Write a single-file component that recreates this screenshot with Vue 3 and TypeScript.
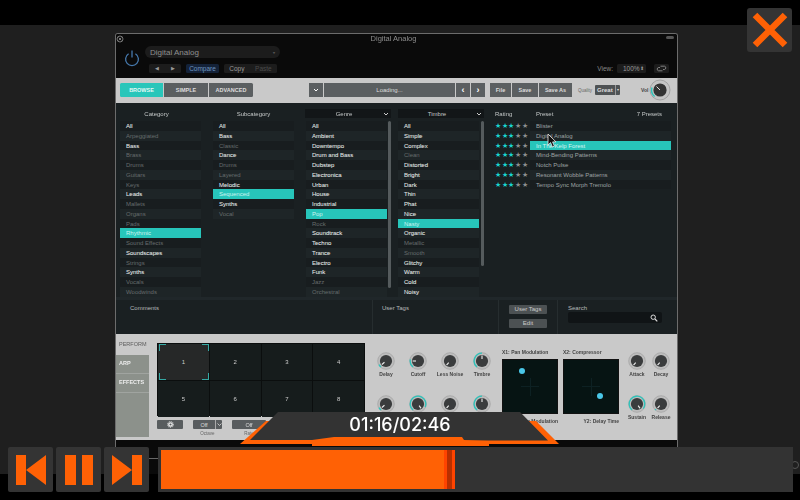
<script setup lang="ts">
interface Item { t: string; b?: boolean; s?: boolean }
const mk = (s: string): Item[] => s.split('|').map((x) => {
  const sel = x.startsWith('*'); const bright = x.startsWith('+');
  return { t: x.replace(/^[*+]/, ''), b: bright, s: sel };
});
const category = mk('+All|Arpeggiated|+Bass|Brass|Drums|Guitars|Keys|+Leads|Mallets|Organs|Pads|*Rhythmic|Sound Effects|+Soundscapes|Strings|+Synths|Vocals|Woodwinds');
const subcategory = mk('+All|+Bass|Classic|+Dance|Drums|Layered|+Melodic|*Sequenced|+Synths|Vocal');
const genre = mk('+All|+Ambient|+Downtempo|+Drum and Bass|+Dubstep|+Electronica|+Urban|+House|+Industrial|*Pop|Rock|+Soundtrack|+Techno|+Trance|+Electro|+Funk|Jazz|Orchestral');
const timbre = mk('+All|+Simple|+Complex|Clean|+Distorted|+Bright|+Dark|+Thin|+Phat|+Nice|*Nasty|+Organic|Metallic|Smooth|+Glitchy|+Warm|+Cold|+Noisy');
const presets = mk('Blister|Digital Analog|*In The Kelp Forest|Mind-Bending Patterns|Notch Pulse|Resonant Wobble Patterns|Tempo Sync Morph Tremolo');
const pads = [1, 2, 3, 4, 5, 6, 7, 8];

interface Knob { label: string; angle: number; arc: number }
const knobs: Knob[] = [
  { label: 'Delay', angle: -130, arc: 0.08 }, { label: 'Cutoff', angle: -90, arc: 0.22 }, { label: 'Less Noise', angle: -140, arc: 0 }, { label: 'Timbre', angle: 0, arc: 0.5 },
  { label: '', angle: -130, arc: 0.08 }, { label: '', angle: 145, arc: 0.9 }, { label: '', angle: -140, arc: 0 }, { label: '', angle: 0, arc: 0.5 },
];
const sideKnobs: Knob[] = [
  { label: 'Attack', angle: -140, arc: 0 }, { label: 'Decay', angle: -140, arc: 0 },
  { label: 'Sustain', angle: 145, arc: 0.95 }, { label: 'Release', angle: -140, arc: 0.03 },
];
function arcPath(frac: number, r: number, c: number): string {
  const a0 = (-140 * Math.PI) / 180;
  const a1 = a0 + (frac * 280 * Math.PI) / 180;
  const pt = (a: number) => `${(c + r * Math.sin(a)).toFixed(2)} ${(c - r * Math.cos(a)).toFixed(2)}`;
  return `M${pt(a0)} A${r} ${r} 0 ${frac > 0.64 ? 1 : 0} 1 ${pt(a1)}`;
}
</script>

<template>
  <div class="page">
    <div class="stage">
      <section class="win">
        <header class="head">
          <div class="head-title">
            <svg class="close-dot" width="8" height="8" viewBox="0 0 8 8"><circle cx="4" cy="4" r="3" fill="none" stroke="#777" /><path d="M2.6 2.6l2.8 2.8M5.4 2.6L2.6 5.4" stroke="#777" /></svg>
            <span>Digital Analog</span>
            <i class="pill"></i>
          </div>
          <div class="head-main">
            <svg class="power" width="16" height="18" viewBox="0 0 16 18"><path d="M4.6 4.800a6.400 6.400 0 1 0 6.800 0" fill="none" stroke="#4679ad" stroke-width="1.3" /><path d="M8 1.500v7" stroke="#4679ad" stroke-width="1.3" /></svg>
            <div class="head-controls">
              <div class="preset-select"><span>Digital Analog</span><b>▾</b></div>
              <div class="head-btns">
                <div class="hb arrows"><span>◀</span><span>▶</span></div>
                <div class="hb compare">Compare</div>
                <div class="hb copy"><span>Copy</span><span class="paste">Paste</span></div>
              </div>
            </div>
            <div class="view">
              <span>View:</span>
              <div class="hb zoomsel"><span>100%</span><b>⬍</b></div>
              <div class="hb link">
                <svg width="11" height="7" viewBox="0 0 11 7"><path d="M4.500 1.200h4a1.700 1.700 0 0 1 0 3.300H7M6.500 5.800h-4a1.700 1.700 0 0 1 0-3.300H4" fill="none" stroke="#999" stroke-width=".8" /></svg>
              </div>
            </div>
          </div>
        </header>

        <div class="toolbar">
          <div class="btn-group tabs">
            <span class="tb active">BROWSE</span><span class="tb">SIMPLE</span><span class="tb">ADVANCED</span>
          </div>
          <div class="btn-group loader">
            <span class="tb chev"><svg width="6" height="4" viewBox="0 0 6 4"><path d="M1 1l2 2 2-2" fill="none" stroke="#fff" stroke-width="1" /></svg></span>
            <span class="tb loading">Loading...</span>
            <span class="tb nav">‹</span><span class="tb nav">›</span>
          </div>
          <div class="btn-group files">
            <span class="tb file">File</span><span class="tb save">Save</span><span class="tb saveas">Save As</span>
          </div>
          <span class="quality-label">Quality</span>
          <div class="quality"><span>Great</span><b>▾</b></div>
          <span class="vol-label">Vol</span>
          <svg class="vol" width="22" height="22" viewBox="0 0 22 22">
            <circle cx="11" cy="11" r="10" fill="#c4c4c4" stroke="#999" stroke-width=".8" />
            <path :d="arcPath(0.24, 8.4, 11)" fill="none" stroke="#2cc4bb" stroke-width="1.4" />
            <circle cx="11" cy="11" r="6.600" fill="#333" />
            <path d="M11 11L7.500 7.500" stroke="#ddd" stroke-width="1" />
          </svg>
        </div>

        <div class="browser">
          <div class="heads">
            <div class="h h-cat">Category</div>
            <div class="h h-sub">Subcategory</div>
            <div class="h h-box h-gen"><span>Genre</span><svg width="6" height="4" viewBox="0 0 6 4"><path d="M1 1l2 2 2-2" fill="none" stroke="#ccc" stroke-width="1" /></svg></div>
            <div class="h h-box h-tim"><span>Timbre</span><svg width="6" height="4" viewBox="0 0 6 4"><path d="M1 1l2 2 2-2" fill="none" stroke="#ccc" stroke-width="1" /></svg></div>
            <div class="h h-rate">Rating</div>
            <div class="h h-pre"><span>Preset</span><span>7 Presets</span></div>
          </div>
          <div class="lists">
            <ul class="list l-cat"><li v-for="i in category" :key="i.t" :class="{ bright: i.b, sel: i.s }">{{ i.t }}</li></ul>
            <ul class="list l-sub"><li v-for="i in subcategory" :key="i.t" :class="{ bright: i.b, sel: i.s }">{{ i.t }}</li></ul>
            <ul class="list l-gen"><li v-for="i in genre" :key="i.t" :class="{ bright: i.b, sel: i.s }">{{ i.t }}</li></ul>
            <div class="scroll s-gen"><i></i></div>
            <ul class="list l-tim"><li v-for="i in timbre" :key="i.t" :class="{ bright: i.b, sel: i.s }">{{ i.t }}</li></ul>
            <div class="scroll s-tim"><i></i></div>
            <div class="ratings">
              <div v-for="p in presets" :key="p.t" class="stars"><span v-for="n in 5" :key="n" :class="{ on: n <= 3 }">★</span></div>
            </div>
            <ul class="list l-pre"><li v-for="i in presets" :key="i.t" :class="{ sel: i.s }">{{ i.t }}</li></ul>
          </div>
          <div class="info">
            <div class="i-comments">Comments</div>
            <div class="i-tags">User Tags</div>
            <div class="i-btns"><span>User Tags</span><span>Edit</span></div>
            <div class="i-search">
              <div>Search</div>
              <div class="search-box"><svg width="8" height="8" viewBox="0 0 8 8"><circle cx="3.200" cy="3.200" r="2.200" fill="none" stroke="#ddd" stroke-width="1" /><path d="M5 5l2.300 2.300" stroke="#ddd" stroke-width="1.2" /></svg></div>
            </div>
          </div>
        </div>

        <div class="perform">
          <nav class="side">
            <div class="side-cur">PERFORM</div>
            <div class="side-tab">ARP</div>
            <div class="side-tab">EFFECTS</div>
            <div class="side-rest"></div>
          </nav>
          <div class="pad-col">
            <div class="pads">
              <div v-for="p in pads" :key="p" class="pad" :class="{ cur: p === 1 }">
                {{ p }}
                <template v-if="p === 1"><i class="c tl"></i><i class="c tr"></i><i class="c bl"></i><i class="c br"></i></template>
              </div>
            </div>
            <div class="pad-ctrls">
              <div class="ctl gear-c"><span class="cb gear">
                <svg width="7" height="7" viewBox="0 0 7 7"><circle cx="3.500" cy="3.500" r="1.700" fill="none" stroke="#eee" stroke-width="1.3" /><circle cx="3.500" cy="3.500" r="3" fill="none" stroke="#eee" stroke-width=".9" stroke-dasharray="1 1" /></svg>
              </span></div>
              <div class="ctl oct-c">
                <span class="cb off"><span class="off-l">Off</span><span class="off-c"><svg width="5" height="3" viewBox="0 0 5 3"><path d="M.5.5l2 2 2-2" fill="none" stroke="#ddd" stroke-width=".8" /></svg></span></span>
                <em>Octave</em>
              </div>
              <div class="ctl rate-c"><span class="cb off">Off</span><em>Rate</em></div>
            </div>
          </div>
          <div class="knobs">
            <div v-for="(k, n) in knobs" :key="n" class="knob">
              <svg width="18" height="18" viewBox="0 0 18 18">
                <circle cx="9" cy="9" r="8.300" fill="#bdbdbd" stroke="#9a9a9a" stroke-width=".6" />
                <path v-if="k.arc" :d="arcPath(k.arc, 7.8, 9)" fill="none" stroke="#2cc4bb" stroke-width="1.3" />
                <circle cx="9" cy="9" r="6.100" fill="#3a3c3d" />
                <path d="M9 7V3.600" :transform="`rotate(${k.angle} 9 9)`" stroke="#eee" stroke-width="1.1" />
              </svg>
              <span>{{ k.label }}</span>
            </div>
          </div>
          <div class="xy-group">
            <div class="xy">
              <div class="xy-t">X1: Pan Modulation</div>
              <div class="xy-box"><i class="dot d1"></i></div>
              <div class="xy-b">Y1: Pan Modulation</div>
            </div>
            <div class="xy">
              <div class="xy-t">X2: Compressor</div>
              <div class="xy-box"><i class="dot d2"></i></div>
              <div class="xy-b">Y2: Delay Time</div>
            </div>
          </div>
          <div class="knobs side-knobs">
            <div v-for="k in sideKnobs" :key="k.label" class="knob">
              <svg width="18" height="18" viewBox="0 0 18 18">
                <circle cx="9" cy="9" r="8.300" fill="#bdbdbd" stroke="#9a9a9a" stroke-width=".6" />
                <path v-if="k.arc" :d="arcPath(k.arc, 7.8, 9)" fill="none" stroke="#2cc4bb" stroke-width="1.3" />
                <circle cx="9" cy="9" r="6.100" fill="#3a3c3d" />
                <path d="M9 7V3.600" :transform="`rotate(${k.angle} 9 9)`" stroke="#eee" stroke-width="1.1" />
              </svg>
              <span>{{ k.label }}</span>
            </div>
          </div>
        </div>
      </section>
    </div>

    <svg class="cursor" width="10" height="15" viewBox="0 0 10 15"><path d="M1 1v11l2.600-2.400L5.400 14l2-.9-1.800-4.200H9z" fill="#111" stroke="#eee" stroke-width=".8" /></svg>

    <button class="x-btn" aria-label="Close">
      <svg width="38" height="38" viewBox="0 0 38 38"><path d="M4 4l30 30M34 4L4 34" stroke="#ff6105" stroke-width="6.500" /></svg>
    </button>

    <div class="time">
      <svg width="324" height="36" viewBox="0 0 324 36">
        <path d="M0 33L26 10H296L319 33Z" fill="#ff6105" />
        <path d="M72 33H249V35H72Z" fill="#ff6105" />
        <path d="M10 29L38 1H280L308 29.500H248L224 29 222 26H94L72 29Z" fill="#333" />
      </svg>
      <span class="time-text">01:16/02:46</span>
    </div>

    <div class="player">
      <button class="pb" aria-label="Previous"><svg width="30" height="30" viewBox="0 0 30 30"><path d="M0 0h10v30H0zM30 0v30L10 15z" fill="#ff6105" /></svg></button>
      <button class="pb" aria-label="Pause"><svg width="30" height="30" viewBox="0 0 30 30"><path d="M1 0h11v30H1zM18 0h11v30H18z" fill="#ff6105" /></svg></button>
      <button class="pb" aria-label="Next"><svg width="30" height="30" viewBox="0 0 30 30"><path d="M0 0l20 15L0 30zM20 0h10v30H20z" fill="#ff6105" /></svg></button>
      <div class="track">
        <div class="fill"><i class="f1"></i><i class="f2"></i><i class="f3"></i></div>
      </div>
    </div>
    <i class="edge-ring"></i>
  </div>
</template>

<style>
html, body { margin: 0; background: #000; }
</style>

<style scoped>
* { box-sizing: border-box; }
.page { position: relative; width: 800px; height: 500px; overflow: hidden; background: #000; font-family: "Liberation Sans", Arial, sans-serif; }
.stage { margin-top: 25px; height: 449px; background: #1f1f1f; padding: 8px 0 0 115px; }
.win { width: 563px; height: 441px; background: #0a0a0a; border: 1px solid #6c6c6c; border-bottom: 0; border-radius: 3px 3px 0 0; filter: blur(.45px); overflow: hidden; }

.head { height: 44px; background: #0a0a0a; }
.head-title { position: relative; height: 10px; text-align: center; color: #8c8c8c; font-size: 7.500px; line-height: 9px; }
.head-title span { position: relative; left: -3px; }
.close-dot { position: absolute; left: 0; top: 1px; }
.pill { position: absolute; right: 3px; top: 2px; width: 8px; height: 3px; border-radius: 2px; background: #555; }
.head-main { display: flex; padding: 2px 8px 0 8px; }
.power { margin: 3px 0 0 0; }
.head-controls { margin-left: 5px; width: 135px; }
.preset-select { display: flex; justify-content: space-between; align-items: center; height: 12px; background: #1c1c1c; border-radius: 6px; color: #8f8f8f; font-size: 8px; padding: 0 5px; }
.preset-select b { font-size: 4px; color: #555; }
.head-btns { display: flex; margin-top: 6px; gap: 5px; padding-left: 4px; }
.hb { height: 9px; background: #1c1c1c; border-radius: 1.500px; font-size: 6.500px; line-height: 9px; color: #999; }
.arrows { width: 32px; display: flex; justify-content: space-around; font-size: 5px; }
.compare { width: 33px; background: #142238; color: #6e96c0; text-align: center; }
.copy { width: 53px; display: flex; justify-content: space-around; }
.paste { color: #4b4b4b; }
.view { margin-left: auto; padding-top: 18px; display: flex; align-items: flex-start; gap: 3px; font-size: 6.500px; color: #888; line-height: 9px; }
.view > span { margin-right: 1px; }
.zoomsel { width: 29px; display: flex; justify-content: space-between; padding: 0 3px 0 6px; margin-right: 5px; }
.zoomsel b { font-size: 5px; font-weight: normal; }
.link { width: 15px; display: flex; align-items: center; justify-content: center; }

.toolbar { height: 25px; background: #c9c9c9; display: flex; align-items: center; padding-left: 4px; padding-bottom: 1px; }
.btn-group { display: flex; gap: 1px; height: 14px; }
.tb { display: flex; align-items: center; justify-content: center; background: #5b5f61; color: #ddd; font-size: 5.500px; font-weight: 700; }
.tabs .tb { width: 44px; }
.tabs .tb:first-child { border-radius: 1.500px 0 0 1.500px; }
.tabs .tb:last-child { border-radius: 0 1.500px 1.500px 0; }
.tabs .active { background: #29c6ba; color: #e6f8f6; width: 43px; }
.loader { margin-left: 56px; }
.chev { width: 14px; }
.loading { width: 131px; font-weight: 400; font-size: 6px; }
.nav { width: 14px; font-size: 9px; color: #fff; }
.files { margin-left: 5px; }
.file { width: 21px; } .save { width: 26px; } .saveas { width: 33px; }
.quality-label { margin-left: 6px; width: 16px; font-size: 4.500px; color: #666; }
.quality { margin-left: 1px; width: 25px; height: 10px; background: #4f5355; border-radius: 1px; color: #ddd; font-size: 6px; line-height: 10px; padding-left: 2px; display: flex; justify-content: space-between; font-weight: 700; }
.quality b { font-size: 4px; border-left: 1px solid #999; padding: 0 1px; font-weight: 400; }
.vol-label { margin-left: 21px; font-size: 5px; font-weight: 700; color: #444; }
.vol { margin-left: 1px; }

.browser { height: 231px; background: #1a2022; }
.heads { position: relative; height: 18px; padding-top: 3px; display: flex; align-items: center; font-size: 6px; color: #c4c8c8; }
.h { flex: none; text-align: center; }
.h-cat { margin-left: 4px; width: 73px; }
.h-sub { margin-left: 20px; width: 81px; }
.h-box { display: flex; align-items: center; justify-content: space-between; height: 9px; background: #121618; padding: 0 2px 0 0; }
.h-box span { flex: 1; text-align: center; }
.h-gen { margin-left: 11px; width: 86px; }
.h-tim { margin-left: 7px; width: 86px; }
.h-rate { margin-left: 11px; width: 41px; text-align: left; }
.h-pre { width: 126px; display: flex; justify-content: space-between; }

.lists { display: flex; height: 176px; }
.list { list-style: none; margin: 0; padding: 0; flex: none; }
.list li { height: 9.750px; line-height: 10.500px; font-size: 6px; padding-left: 6px; color: #666c6d; white-space: nowrap; background: #181d1f; }
.list li:nth-child(even) { background: #1e2527; }
.list li.bright { color: #e6e9e9; -webkit-text-stroke: .05px #e6e9e9; }
.list li.sel { background: #27c5ba; color: #cdf3ef; }
.l-cat { margin-left: 4px; width: 81px; }
.l-sub { margin-left: 12px; width: 81px; }
.l-gen { margin-left: 12px; width: 81px; }
.l-tim { margin-left: 7px; width: 81px; }
.scroll { width: 3px; margin-left: 1px; height: 167px; }
.scroll i { display: block; height: 100%; background: #555b5d; border-radius: 2px; }
.s-tim { margin-left: 2px; height: 145px; }
.ratings { margin-left: 11px; width: 35px; }
.stars { height: 9.750px; line-height: 9.500px; font-size: 7px; display: flex; }
.stars span { width: 6.700px; color: #8a8e90; }
.stars .on { color: #18d5cf; }
.l-pre { width: 141px; }
.l-pre li { color: #9ea3a4; }
.l-pre li.sel { color: #d6f5f2; }

.info { display: flex; height: 37px; margin-top: 0; border-top: 3px solid #20272a; background: #1a2022; color: #b6baba; font-size: 6px; line-height: 8px; }
.i-comments { margin-left: 14px; width: 242px; padding-top: 4px; }
.i-tags { width: 126px; border-left: 1px solid #262d2f; padding: 4px 0 0 9px; }
.i-btns { width: 60px; padding-top: 5px; display: flex; flex-direction: column; gap: 5px; align-items: center; border-left: 1px solid #262d2f; border-right: 1px solid #262d2f; }
.i-btns span { width: 38px; height: 9px; background: #4c5153; border-radius: 1px; text-align: center; line-height: 9px; color: #ccc; }
.i-search { margin-left: 10px; width: 94px; padding-top: 4px; }
.search-box { height: 11px; background: #101416; border-radius: 2px; display: flex; justify-content: flex-end; align-items: center; padding-right: 4px; }

.perform { height: 106px; background: #c9c9c9; display: flex; align-items: flex-start; }
.side { width: 33px; height: 103px; display: flex; flex-direction: column; }
.side-cur { height: 21px; padding: 7px 0 0 3px; font-size: 5.500px; color: #5c5c5c; }
.side-tab { height: 19px; background: #8c918b; color: #eee; font-size: 5.500px; font-weight: 700; padding: 5px 0 0 3px; border-bottom: 1px solid #a0a4a0; }
.side-rest { flex: 1; background: #8c918b; }
.pad-col { margin-left: 8px; width: 208px; padding-top: 9px; }
.pads { display: grid; grid-template-columns: repeat(4, 1fr); grid-template-rows: repeat(2, 36px); height: 73px; background: #0b0e0e; border: 1px solid #0b0e0e; gap: 1px; }
.pad { position: relative; background: #161c1c; color: #ccc; font-size: 6px; display: flex; align-items: center; justify-content: center; }
.pad.cur { background: #262828; }
.c { position: absolute; width: 7px; height: 7px; border: 1px solid #35a9a4; }
.tl { left: 1px; top: 0; border-right: 0; border-bottom: 0; }
.tr { right: 0; top: 0; border-left: 0; border-bottom: 0; }
.bl { left: 1px; bottom: 0; border-right: 0; border-top: 0; }
.br { right: 0; bottom: 0; border-left: 0; border-top: 0; }
.pad-ctrls { display: flex; margin-top: 4px; }
.ctl { display: flex; flex-direction: column; align-items: center; }
.ctl em { font-style: normal; font-size: 4.500px; color: #666; margin-top: 2px; }
.cb { display: flex; align-items: center; justify-content: center; height: 9px; background: #585c5e; border-radius: 1px; color: #ddd; font-size: 5.500px; }
.gear { width: 26px; }
.oct-c { margin-left: 10px; }
.off { width: 29px; }
.off-l { flex: 1; text-align: center; }
.off-c { width: 7px; height: 100%; display: flex; align-items: center; justify-content: center; border-left: 1px solid #aaa; }
.rate-c { margin-left: 10px; }
.rate-c .off { width: 34px; }

.knobs { margin-left: 5px; margin-top: 18px; width: 128px; display: grid; grid-template-columns: repeat(4, 32px); grid-auto-rows: 43px; }
.knob { display: flex; flex-direction: column; align-items: center; }
.knob span { font-size: 5px; font-weight: 700; color: #444; margin-top: 1px; white-space: nowrap; }
.xy-group { margin-left: 4px; display: flex; gap: 5px; padding-top: 15px; }
.xy { width: 56px; font-size: 5px; font-weight: 700; color: #444; }
.xy-t { height: 10px; }
.xy-box { position: relative; height: 55px; background: linear-gradient(#0d2123, #0d2123) center / 1px 18px no-repeat, linear-gradient(#0d2123, #0d2123) center / 18px 1px no-repeat, #061413; border: 1px solid #111; }
.xy-b { margin-top: 4px; text-align: right; }
.dot { position: absolute; width: 6px; height: 6px; border-radius: 50%; background: #4ac7e8; }
.d1 { left: 16px; top: 8px; }
.d2 { left: 33px; top: 33px; }
.side-knobs { margin-left: 6px; width: 48px; grid-template-columns: repeat(2, 24px); }

.cursor { position: absolute; left: 547px; top: 133px; }
.x-btn { position: absolute; left: 747px; top: 8px; width: 45px; height: 44px; border: 0; padding: 0; background: #343434; border-radius: 3px; display: flex; align-items: center; justify-content: center; }
.time { position: absolute; left: 240px; top: 411px; width: 324px; height: 36px; }
.time svg { display: block; }
.time-text { position: absolute; left: 0; right: 0; top: 2px; text-align: center; color: #fff; font-family: Inter, "Open Sans", sans-serif; font-weight: 500; font-size: 18px; line-height: 24px; padding-right: 4px; }
.player { position: absolute; z-index: 1; left: 8px; top: 447px; width: 785px; height: 45px; display: flex; gap: 3px; }
.pb { width: 45px; height: 45px; border: 0; padding: 0; background: #343434; border-radius: 2px; display: flex; align-items: center; justify-content: center; }
.track { margin-left: 6px; flex: 1; background: #333; padding: 3px; position: relative; }
.track::before { content: ""; position: absolute; left: -9px; top: 11px; width: 9px; height: 1px; background: #666; }
.fill { position: relative; width: 294px; height: 39px; background: #ff6105; }
.fill i { position: absolute; top: 0; bottom: 0; }
.f1 { left: 283px; width: 3px; background: #ff4400; }
.f2 { left: 286px; width: 5px; background: #b83000; }
.f3 { left: 291px; width: 3px; background: #ff4400; }
.edge-ring { position: absolute; left: 791px; top: 461px; width: 8px; height: 8px; border: 1px solid #555; border-radius: 50%; }
</style>
